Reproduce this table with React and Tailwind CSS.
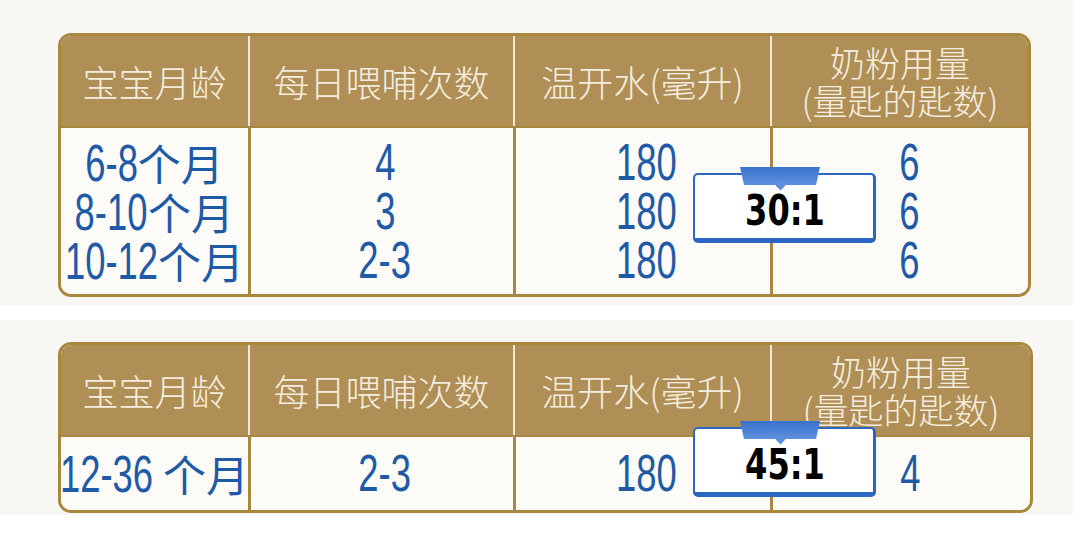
const HEAD = "text-[#f4eddf] font-light [font-family:'Noto_Sans_CJK_SC',sans-serif]";
const BLUE = "text-[#1f5aa6]";

const NUM_SIZE = 52;
const SQUEEZE = 0.7;
const ADV = { "-": 0.333 };

// digits drawn in a squeezed Liberation Sans, CJK left at normal width
function Mixed({ text }) {
  const parts = text.split(/([0-9-]+)/).filter(Boolean);
  return parts.map((p, i) => {
    if (/^[0-9-]+$/.test(p)) {
      const w = [...p].reduce((s, ch) => s + (ADV[ch] ?? 0.556), 0) * NUM_SIZE;
      const m = (-(1 - SQUEEZE) / 2) * w;
      return (
        <span
          key={i}
          style={{ marginLeft: m, marginRight: m }}
          className="inline-block scale-x-[0.7] text-[52px] [font-family:'Liberation_Sans',sans-serif]"
        >
          {p}
        </span>
      );
    }
    return (
      <span key={i} className="text-[43px] [font-family:'Noto_Sans_CJK_SC',sans-serif]">
        {p}
      </span>
    );
  });
}

function Badge({ label, className }) {
  return (
    <div className={`absolute w-[183px] h-[70px] ${className}`}>
      <div className="absolute inset-0 bg-white rounded-[5px] border-2 border-b-[5px] border-r-[3px] border-[#2c66c3]" />
      <div className="absolute left-[47px] top-[-6px] w-[80px] h-[18px] bg-gradient-to-b from-[#3a73cc] to-[#5d8fdd] [clip-path:polygon(0_0,100%_0,95%_100%,5%_100%)]" />
      <div className="absolute left-[84px] top-[9px] w-[7px] h-[7px] rotate-45 bg-[#5d8fdd]" />
      <div className="absolute inset-0 pt-[5px] flex items-center justify-center">
        <span className="inline-block scale-x-[0.85] text-black font-bold text-[42px] leading-none [font-family:'DejaVu_Sans_Condensed','DejaVu_Sans',sans-serif]">
          {label}
        </span>
      </div>
    </div>
  );
}

function HeadRow() {
  return (
    <div className="grid grid-cols-[187px_265px_257px_1fr] h-[92px] bg-[#b08f56] border-b-[2px] border-[#a8883f]">
      <div className={`flex items-center justify-center text-[36px] leading-none ${HEAD}`}>宝宝月龄</div>
      <div className={`flex items-center justify-center text-[36px] leading-none border-l-[2px] border-[#f1e7d2] ${HEAD}`}>每日喂哺次数</div>
      <div className={`flex items-center justify-center text-[36px] leading-none border-l-[2px] border-[#f1e7d2] ${HEAD}`}>温开水(毫升)</div>
      <div className={`flex flex-col items-center justify-center text-[35px] leading-[38px] border-l-[2px] border-[#f1e7d2] ${HEAD}`}>
        <span>奶粉用量</span>
        <span>(量匙的匙数)</span>
      </div>
    </div>
  );
}

function BodyRow({ rows, height }) {
  const cols = [0, 1, 2, 3];
  return (
    <div className={`grid grid-cols-[187px_265px_257px_1fr] bg-[#fcfbf8] ${height}`}>
      {cols.map((c) => (
        <div
          key={c}
          className={`flex flex-col items-center justify-center ${c > 0 ? "border-l-[3px] border-[#a8883f]" : ""} ${BLUE}`}
        >
          {rows.map((r, i) => (
            <div key={i} className={`whitespace-nowrap leading-[49px] h-[49px] ${c === 3 ? "pl-[18px]" : c > 0 ? "pl-[6px]" : ""}`}>
              <Mixed text={r[c]} />
            </div>
          ))}
        </div>
      ))}
    </div>
  );
}

export default function App() {
  return (
    <div className="w-[1080px] h-[541px] bg-white relative overflow-hidden">
      <div className="w-[1073px] h-[305px] bg-[#f8f7f3] pt-[33px] pl-[58px] relative">
        <div className="w-[973px] border-[3px] border-[#a8883f] rounded-[13px] overflow-hidden">
          <HeadRow />
          <BodyRow
            height="h-[166px]"
            rows={[
              ["6-8个月", "4", "180", "6"],
              ["8-10个月", "3", "180", "6"],
              ["10-12个月", "2-3", "180", "6"],
            ]}
          />
        </div>
        <Badge label="30:1" className="left-[693px] top-[173px]" />
      </div>

      <div className="mt-[15px] w-[1073px] h-[195px] bg-[#f8f7f3] pt-[22px] pl-[58px] relative">
        <div className="w-[975px] border-[3px] border-[#a8883f] rounded-[13px] overflow-hidden">
          <HeadRow />
          <BodyRow height="h-[73px]" rows={[["12-36 个月", "2-3", "180", "4"]]} />
        </div>
        <Badge label="45:1" className="left-[693px] top-[107px]" />
      </div>
    </div>
  );
}
